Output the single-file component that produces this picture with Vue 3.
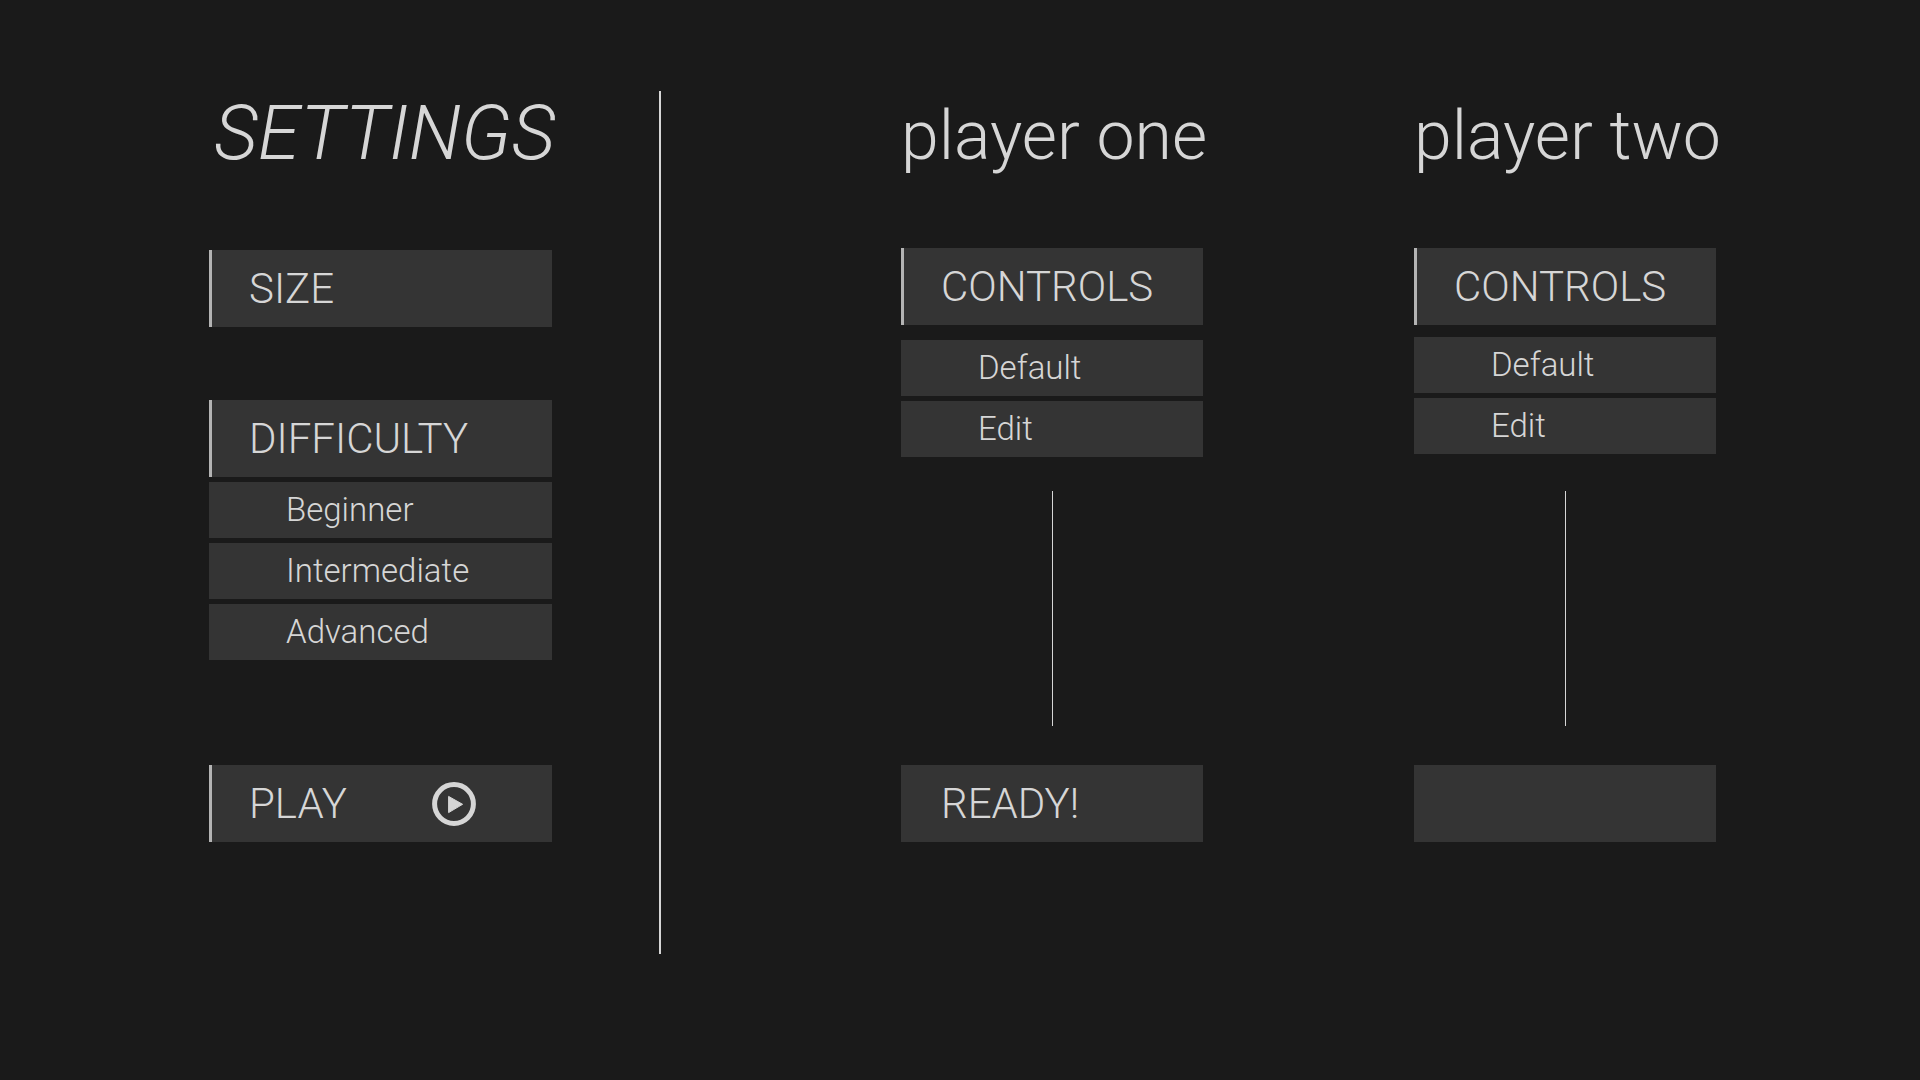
<script setup>
import { ref } from 'vue'

const levels = ['Beginner', 'Intermediate', 'Advanced']
const schemes = ['Default', 'Edit']
const players = ref([
  { id: 'one', name: 'player one', ready: true },
  { id: 'two', name: 'player two', ready: false }
])
</script>

<template>
  <main class="screen">
    <section class="settings">
      <h1 class="title">SETTINGS</h1>
      <button type="button" class="bar accent size">SIZE</button>
      <div class="group">
        <button type="button" class="bar accent">DIFFICULTY</button>
        <button v-for="level in levels" :key="level" type="button" class="option">{{ level }}</button>
      </div>
      <button type="button" class="bar accent play">
        <span>PLAY</span>
        <svg class="play-icon" viewBox="0 0 44 44" aria-hidden="true">
          <circle cx="22" cy="22" r="19.4" fill="none" stroke="currentColor" stroke-width="5" />
          <path d="M16.6 14.4 L30.6 22.3 L16.6 30.6 Z" fill="currentColor" stroke="currentColor" stroke-width="1" stroke-linejoin="round" />
        </svg>
      </button>
    </section>

    <div class="divider"></div>

    <section v-for="player in players" :key="player.id" class="player" :class="player.id">
      <h2 class="name">{{ player.name }}</h2>
      <button type="button" class="bar accent">CONTROLS</button>
      <div class="schemes">
        <button v-for="scheme in schemes" :key="scheme" type="button" class="option">{{ scheme }}</button>
      </div>
      <div class="link"></div>
      <button type="button" class="bar status" :aria-label="player.name + ' status'">{{ player.ready ? 'READY!' : '' }}</button>
    </section>
  </main>
</template>

<style>
body {
  margin: 0;
  background: #1a1a1a;
}
</style>

<style scoped>
.screen {
  display: grid;
  grid-template-columns:
    minmax(0, 209fr) minmax(0, 343fr) minmax(0, 107fr) 2px minmax(0, 240fr)
    minmax(0, 302fr) minmax(0, 211fr) minmax(0, 302fr) minmax(0, 204fr);
  align-items: start;
  box-sizing: border-box;
  min-height: 100vh;
  padding: 91px 0 126px;
  color: #d6d6d6;
  font-family: Roboto, "Liberation Sans", sans-serif;
  font-weight: 300;
}

.settings,
.player {
  display: flex;
  flex-direction: column;
}

.settings {
  grid-column: 2;
}

.divider {
  grid-column: 4;
  align-self: stretch;
  background: #d6d6d6;
}

.one {
  grid-column: 6;
}

.two {
  grid-column: 8;
}

.title,
.name {
  font-weight: 300;
  white-space: nowrap;
}

.title {
  margin: 0 0 75px;
  padding-left: 5px;
  font-size: 76px;
  line-height: 84px;
  font-style: italic;
}

.name {
  margin: 0 0 67px;
  font-size: 68px;
  line-height: 90px;
}

.bar,
.option {
  display: flex;
  align-items: center;
  box-sizing: border-box;
  width: 100%;
  margin: 0;
  border: 0;
  border-radius: 0;
  background: #343434;
  color: inherit;
  font-family: inherit;
  font-weight: 300;
  text-align: left;
  cursor: pointer;
}

.bar {
  height: 77px;
  padding: 0 76px 0 37px;
  font-size: 42px;
}

.accent {
  border-left: 3px solid #b4b4b4;
}

.option {
  height: 56px;
  padding: 0 0 2px 77px;
  font-size: 33px;
}

.group,
.schemes {
  display: flex;
  flex-direction: column;
  gap: 5px;
}

.group {
  margin: 73px 0 105px;
}

.play {
  justify-content: space-between;
}

.play-icon {
  width: 44px;
  height: 44px;
}

.schemes {
  margin: 15px 0 34px;
}

.two .schemes {
  margin: 12px 0 37px;
}

.link {
  align-self: center;
  width: 1px;
  height: 235px;
  margin-bottom: 39px;
  background: #d6d6d6;
}

.status {
  padding-left: 40px;
}
</style>
